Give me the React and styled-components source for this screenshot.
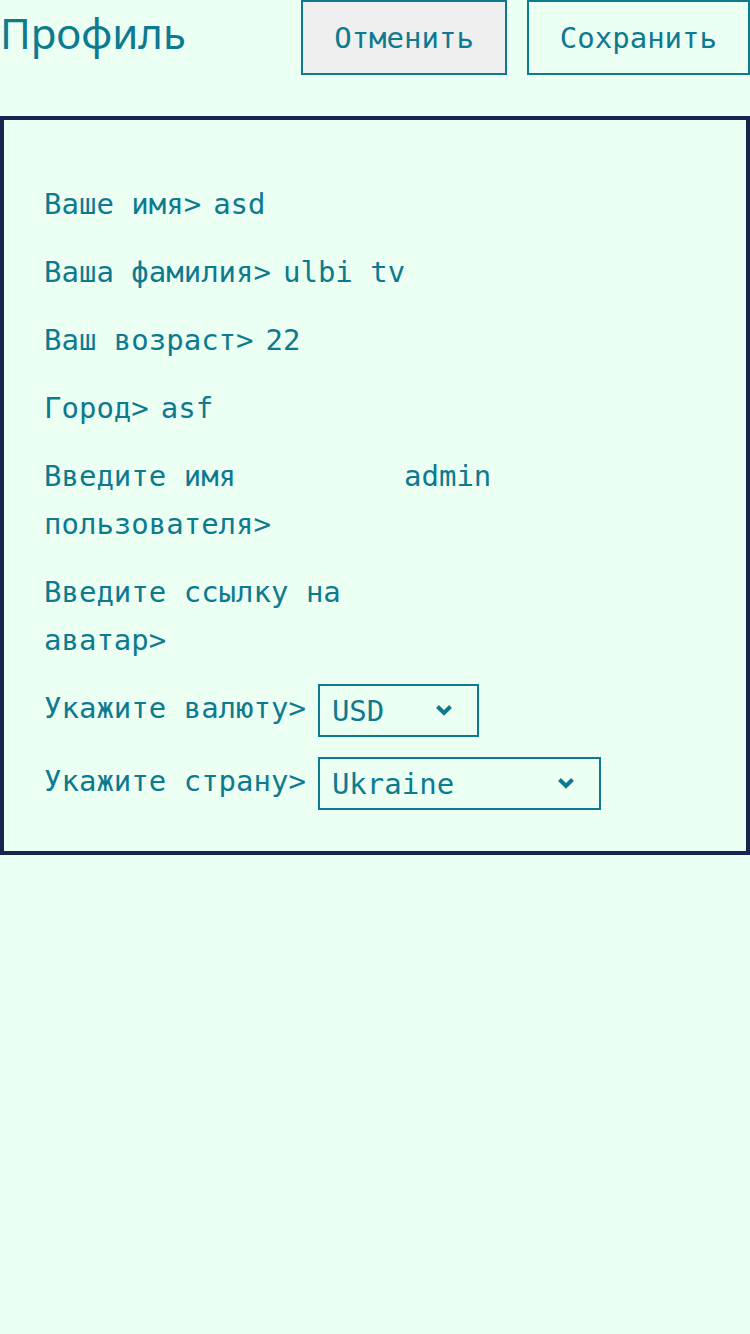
import React from 'react';
import styled, { createGlobalStyle } from 'styled-components';

const GlobalStyle = createGlobalStyle`
  body {
    margin: 0;
    background: #ecfff3;
    color: #0e7a90;
    font-family: "DejaVu Sans Mono", monospace;
  }
`;

const Page = styled.div`
  display: flex;
  flex-direction: column;
  gap: 41px;
  width: 750px;
`;

const Header = styled.div`
  display: flex;
  justify-content: space-between;
  align-items: flex-start;
`;

const Title = styled.h1`
  margin: 0;
  font-family: "Noto Sans", sans-serif;
  font-weight: 400;
  font-size: 42px;
  line-height: 66px;
  color: #0e7a90;
`;

const Buttons = styled.div`
  display: flex;
  gap: 20px;
`;

const Button = styled.button`
  height: 75px;
  padding: 0 31px;
  border: 2px solid #0e7a90;
  background: ${({ $filled }) => ($filled ? '#efefef' : 'transparent')};
  color: #0e7a90;
  font-family: "DejaVu Sans Mono", monospace;
  font-size: 29px;
  cursor: pointer;
`;

const Card = styled.div`
  border: 4px solid #15254f;
  padding: 60px 40px 41px;
  display: flex;
  flex-direction: column;
  gap: 20px;
`;

const Row = styled.div`
  display: flex;
  align-items: flex-start;
  gap: 10px;
`;

const Label = styled.label`
  max-width: 348px;
  font-size: 29px;
  line-height: 48px;
  color: #0e7a90;
`;

const Input = styled.input`
  flex: 1;
  min-width: 0;
  border: none;
  outline: none;
  background: transparent;
  padding: 0 2px;
  font-family: "DejaVu Sans Mono", monospace;
  font-size: 29px;
  line-height: 48px;
  height: 48px;
  color: #0e7a90;
`;

const SelectWrap = styled.div`
  position: relative;
  margin-left: 2px;
  display: flex;
`;

const Select = styled.select`
  appearance: none;
  height: 53px;
  padding: 0 92px 0 12px;
  border: 2px solid #0e7a90;
  border-radius: 0;
  background: transparent;
  color: #0e7a90;
  font-family: "DejaVu Sans Mono", monospace;
  font-size: 29px;
  outline: none;
`;

const Chevron = styled.svg`
  position: absolute;
  right: 26px;
  top: 20px;
  width: 18px;
  height: 12px;
  pointer-events: none;
`;

const fields = [
  { label: 'Ваше имя>', value: 'asd' },
  { label: 'Ваша фамилия>', value: 'ulbi tv' },
  { label: 'Ваш возраст>', value: '22' },
  { label: 'Город>', value: 'asf' },
  { label: 'Введите имя пользователя>', value: 'admin' },
  { label: 'Введите ссылку на аватар>', value: '' },
];

function Dropdown({ value, options }) {
  return (
    <SelectWrap>
      <Select defaultValue={value}>
        {options.map((o) => (
          <option key={o} value={o}>
            {o}
          </option>
        ))}
      </Select>
      <Chevron viewBox="0 0 18 12">
        <path d="M2.5 2.5 L9 9 L15.5 2.5" fill="none" stroke="#0e7a90" strokeWidth="4" />
      </Chevron>
    </SelectWrap>
  );
}

export default function App() {
  return (
    <>
      <GlobalStyle />
      <Page>
        <Header>
          <Title>Профиль</Title>
          <Buttons>
            <Button $filled>Отменить</Button>
            <Button>Сохранить</Button>
          </Buttons>
        </Header>
        <Card>
          {fields.map((f) => (
            <Row key={f.label}>
              <Label>{f.label}</Label>
              <Input defaultValue={f.value} />
            </Row>
          ))}
          <Row>
            <Label>Укажите валюту&gt;</Label>
            <Dropdown value="USD" options={['RUB', 'EUR', 'USD']} />
          </Row>
          <Row>
            <Label>Укажите страну&gt;</Label>
            <Dropdown
              value="Ukraine"
              options={['Armenia', 'Russia', 'Belarus', 'Kazakhstan', 'Ukraine']}
            />
          </Row>
        </Card>
      </Page>
    </>
  );
}
